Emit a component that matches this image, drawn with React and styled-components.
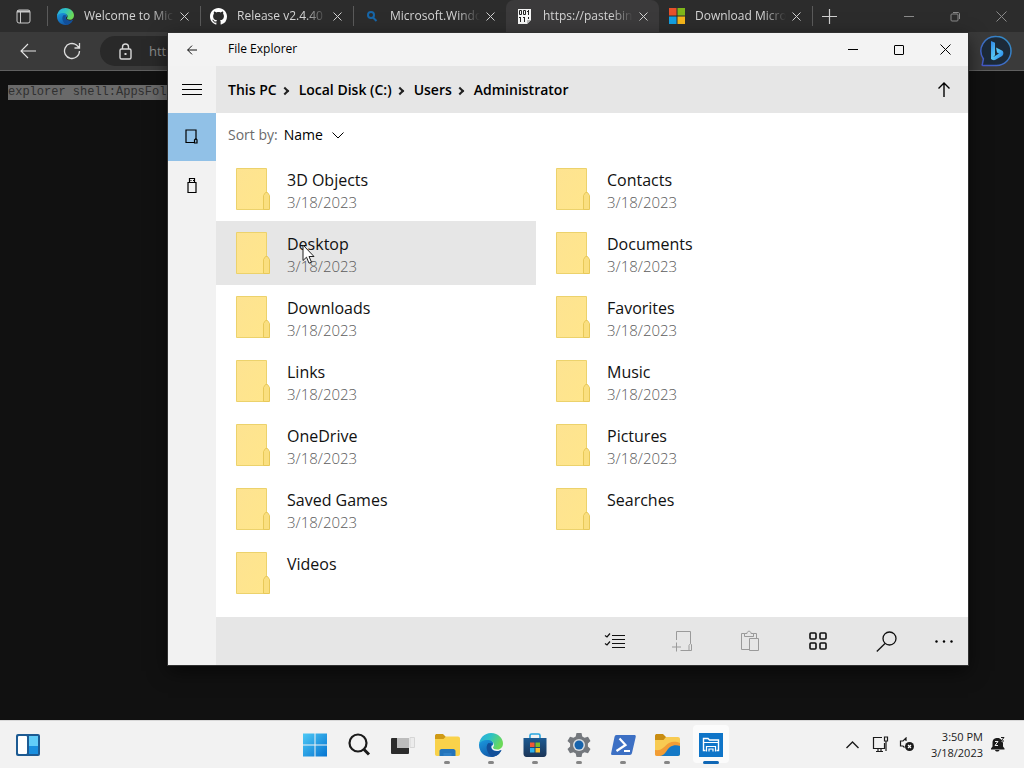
import React from 'react'
import styled, { createGlobalStyle } from 'styled-components'

const GlobalStyle = createGlobalStyle`
  * {
    box-sizing: border-box;
  }
  body {
    margin: 0;
    background: #111111;
    font-family: 'Open Sans', 'Noto Sans', sans-serif;
  }
  button, input, select {
    font: inherit;
    color: inherit;
    margin: 0;
    padding: 0;
    border: 0;
    background: none;
  }
  svg {
    display: block;
    flex: none;
  }
`

const Desktop = styled.div`
  position: relative;
  display: flex;
  flex-direction: column;
  height: 100vh;
  min-height: 480px;
  overflow: hidden;
`

/* browser */

const Browser = styled.section`
  flex: 1;
  min-height: 0;
  display: flex;
  flex-direction: column;
  background: #111111;
  color: #d0d0d0;
`

const TabStrip = styled.div`
  display: flex;
  height: 32px;
  background: #2c2c2c;
`

const TabActions = styled.button`
  width: 47px;
  display: grid;
  place-items: center;
  color: #c8c8c8;
`

const TabItem = styled.div`
  position: relative;
  display: flex;
  align-items: center;
  gap: 10px;
  flex: 0 1 153px;
  min-width: 0;
  padding: 0 8px 0 10px;
  background: ${({ $active }) => ($active ? '#3b3a3b' : 'transparent')};
  border-radius: 8px 8px 0 0;

  &::before {
    content: '';
    position: absolute;
    left: 0;
    top: 6px;
    width: 1px;
    height: 20px;
    background: ${({ $divider }) => ($divider ? '#5a5a5a' : 'transparent')};
  }
`

const TabTitle = styled.button`
  flex: 1;
  min-width: 0;
  margin-right: -8px;
  font-size: 12px;
  line-height: 20px;
  text-align: left;
  white-space: nowrap;
  overflow: hidden;
  color: #d4d4d4;
  mask-image: linear-gradient(to right, #000 75%, transparent 100%);
`

const IconButton = styled.button`
  width: ${({ $w }) => $w || 16}px;
  flex: none;
  display: grid;
  place-items: center;
  color: ${({ $color }) => $color || 'inherit'};
`

const NewTab = styled(IconButton)`
  position: relative;
  color: #d0d0d0;

  &::before {
    content: '';
    position: absolute;
    left: 0;
    top: 6px;
    width: 1px;
    height: 20px;
    background: #5a5a5a;
  }
`

const CaptionButtons = styled.div`
  display: flex;
  margin-left: auto;
`

const Toolbar = styled.div`
  display: flex;
  align-items: center;
  height: 39px;
  padding: 0 12px;
  gap: 12px;
  background: #3a3a3a;
  border-bottom: 1px solid #606060;
`

const AddressBar = styled.label`
  flex: 1;
  display: flex;
  align-items: center;
  gap: 16px;
  height: 30px;
  padding-left: 18px;
  border-radius: 15px;
  background: #292929;
  color: #d8d8d8;
`

const AddressInput = styled.input`
  flex: 1;
  min-width: 0;
  font-size: 13px;
  color: #8c8c8c;
`

const PageText = styled.pre`
  margin: 0;
  padding: 14px 8px;
  font: 12px/15px 'Liberation Mono', monospace;
  color: #303030;

  mark {
    display: inline-block;
    color: inherit;
    background: #6a6a6a;
  }
`

/* file explorer */

const Window = styled.main`
  position: absolute;
  top: 33px;
  left: 168px;
  right: 56px;
  bottom: 103px;
  display: flex;
  flex-direction: column;
  background: #ffffff;
  color: #000000;
  outline: 1px solid #303030;
  box-shadow: 0 6px 18px rgba(0, 0, 0, 0.6);
`

const TitleBar = styled.header`
  display: flex;
  height: 33px;
  background: #f3f3f3;
`

const WindowTitle = styled.h1`
  flex: 1;
  margin: 0;
  padding-left: 12px;
  font-size: 12px;
  line-height: 32px;
  font-weight: 400;
`

const WindowBody = styled.div`
  flex: 1;
  min-height: 0;
  display: flex;
`

const Sidebar = styled.nav`
  width: 48px;
  display: flex;
  flex-direction: column;
  background: #f2f2f2;
`

const SidebarButton = styled.button`
  height: 48px;
  display: grid;
  place-items: center;
  background: ${({ $active }) => ($active ? '#91c1e7' : 'transparent')};

  &:first-child {
    height: 47px;
  }
`

const Content = styled.div`
  flex: 1;
  min-width: 0;
  display: flex;
  flex-direction: column;
`

const PathBar = styled.div`
  display: flex;
  align-items: center;
  height: 47px;
  padding-left: 12px;
  background: #e6e6e6;
`

const Crumbs = styled.ol`
  flex: 1;
  display: flex;
  align-items: center;
  margin: 0;
  padding: 0;
  list-style: none;
  font-size: 14px;
  line-height: 20px;
  font-weight: 600;

  li {
    display: flex;
    align-items: center;
  }
  li + li::before {
    content: '';
    width: 4px;
    height: 4px;
    margin: 2px 11px 0 5px;
    border: solid #222;
    border-width: 2px 2px 0 0;
    transform: rotate(45deg);
  }
  a {
    color: inherit;
    text-decoration: none;
  }
`

const SortRow = styled.div`
  display: flex;
  align-items: center;
  height: 44px;
  padding-left: 12px;
  gap: 6px;
  font-size: 14px;
  line-height: 20px;

  label {
    color: #6b6b6b;
  }
  select {
    appearance: none;
    width: 42px;
  }
`

const FileGrid = styled.ul`
  flex: 1;
  min-height: 0;
  overflow: hidden;
  display: grid;
  grid-template-columns: repeat(auto-fill, 320px);
  grid-auto-rows: 64px;
  margin: 0;
  padding: 0;
  list-style: none;
`

const FileButton = styled.button`
  width: 100%;
  height: 100%;
  display: flex;
  gap: 16px;
  padding: 11px 20px 0;
  text-align: left;
  background: ${({ $hovered }) => ($hovered ? '#e6e6e6' : 'transparent')};
`

const FileText = styled.span`
  display: flex;
  flex-direction: column;
`

const FileName = styled.span`
  font-size: 16px;
  line-height: 24px;
  color: #111111;
`

const FileDate = styled.span`
  font-size: 15px;
  line-height: 20px;
  font-weight: 300;
  color: #5c5c5c;
`

const CommandBar = styled.footer`
  display: flex;
  justify-content: flex-end;
  height: 48px;
  background: #e6e6e6;
`

/* taskbar */

const Taskbar = styled.footer`
  display: grid;
  grid-template-columns: 1fr auto 1fr;
  height: 48px;
  background: #f2f2f2;
  border-top: 1px solid #d8d8d8;
  color: #1b1b1b;
`

const TaskGroup = styled.div`
  display: flex;
  align-items: center;
  padding: 0 ${({ $right }) => $right || 0}px 0 ${({ $left }) => $left || 0}px;
  justify-content: ${({ $end }) => ($end ? 'flex-end' : 'flex-start')};
`

const AppButton = styled.button`
  position: relative;
  width: 44px;
  height: 46px;
  display: grid;
  place-items: center;

  &::before {
    content: '';
    position: absolute;
    inset: 3px 4px 5px 4px;
    border-radius: 4px;
    background: ${({ $active }) => ($active ? '#fbfbfb' : 'transparent')};
  }
  &::after {
    content: '';
    position: absolute;
    bottom: 4px;
    width: ${({ $active }) => ($active ? 16 : 6)}px;
    height: 3px;
    border-radius: 2px;
    background: ${({ $active, $running }) =>
      $active ? '#1067b5' : $running ? '#858585' : 'transparent'};
  }
  svg {
    position: relative;
  }
`

const Clock = styled.time`
  display: flex;
  flex-direction: column;
  margin: 0 7px 0 12px;
  text-align: right;
  font-size: 11px;
  line-height: 16px;
`

const Pointer = styled.svg`
  position: absolute;
  left: 302px;
  top: 244px;
`

/* icons */

const Icon = ({ w = 16, h, children, sw = 1, ...rest }) => (
  <svg
    width={w}
    height={h || w}
    viewBox={`0 0 ${w} ${h || w}`}
    fill="none"
    stroke="currentColor"
    strokeWidth={sw}
    aria-hidden="true"
    {...rest}
  >
    {children}
  </svg>
)

const CloseIcon = ({ size = 9 }) => (
  <Icon w={size}>
    <path d={`M.5.5l${size - 1} ${size - 1}M${size - 0.5}.5l-${size - 1} ${size - 1}`} />
  </Icon>
)

const BackIcon = ({ w = 16 }) => (
  <Icon w={w} viewBox="0 0 16 16" sw={w > 12 ? 1.1 : 1.5}>
    <path d="M16 8H1M8 1L1 8l7 7" />
  </Icon>
)

const EdgeIcon = ({ w, id }) => (
  <svg width={w} height={w} viewBox="0 0 24 24" aria-hidden="true">
    <defs>
      <linearGradient id={`${id}a`} x1="0" y1="0" x2="1" y2="0.4">
        <stop offset="0" stopColor="#2aa9e4" />
        <stop offset="0.5" stopColor="#2ec2c4" />
        <stop offset="1" stopColor="#6bd958" />
      </linearGradient>
      <linearGradient id={`${id}b`} x1="0" y1="0" x2="0.6" y2="1">
        <stop offset="0" stopColor="#1b9de2" />
        <stop offset="1" stopColor="#1256a6" />
      </linearGradient>
    </defs>
    <path fill={`url(#${id}b)`} d="M0 12C0 8 4 5.500 8 6c5 .5 7 3.500 6 6-3 1-2 6 4 6 2 0 3.500-.7 4.500-1C20 22 16 24 12 24 5 24 0 18.500 0 12z" />
    <path fill="#124f99" d="M9.500 10C6 13 7.500 20 13 23.800c4 0 7.500-2.300 9.500-6.800-5 3-10.500 1-10.500-3.500 0-1.500.8-2.500 1.500-3z" />
    <path fill={`url(#${id}a)`} d="M0 11.500C.5 5 5.500 0 12 0c7.500 0 12 5.500 12 10.500 0 3.500-2.500 6-5.500 6-3 0-4.500-1-4.500-2 0-.7 1-1 1-2.500 0-3-3-5-6.500-5C4 7 .8 9 0 11.500z" />
  </svg>
)

const GithubIcon = () => (
  <svg width="17" height="17" viewBox="0 0 16 16" fill="#fff" aria-hidden="true">
    <path d="M8 0C3.580 0 0 3.580 0 8c0 3.540 2.290 6.530 5.470 7.590.4.070.55-.17.55-.38 0-.19-.01-.82-.01-1.490-2.010.37-2.530-.49-2.690-.94-.09-.23-.48-.94-.82-1.130-.28-.15-.68-.52-.01-.53.63-.01 1.080.58 1.230.82.72 1.210 1.870.87 2.330.66.070-.52.280-.87.510-1.070-1.780-.2-3.640-.89-3.640-3.950 0-.87.31-1.590.82-2.150-.08-.2-.36-1.020.08-2.120 0 0 .67-.21 2.200.82.64-.18 1.320-.27 2-.27s1.360.09 2 .27c1.530-1.040 2.200-.82 2.200-.82.44 1.100.16 1.920.08 2.120.51.56.82 1.270.82 2.150 0 3.070-1.870 3.750-3.650 3.950.29.25.54.73.54 1.480 0 1.070-.01 1.930-.01 2.200 0 .21.15.46.55.38A8.010 8.010 0 0 0 16 8c0-4.420-3.580-8-8-8z" />
  </svg>
)

const SearchTabIcon = () => (
  <Icon w={17} sw={2} stroke="#1766a8">
    <circle cx="8" cy="7" r="3" />
    <path d="M10 9.500l3.500 3.500" />
  </Icon>
)

const PasteIcon = () => (
  <svg width="17" height="17" viewBox="0 0 17 17" aria-hidden="true">
    <path fill="#f4f4f4" d="M2 1h13v11l-4 4H2z" />
    <g stroke="#222" fill="none">
      <path d="M3.500 2.500h2v4h-2zM7.500 2.500h2v4h-2zM12.500 2v5M11 3.500h1.500M4.500 9v5M3 9.500h1.500M8.500 9v5M7 9.500h1.500M12.500 9v2" />
    </g>
    <path fill="#bbb" d="M11 16v-4h4z" />
  </svg>
)

const FourSquares = () => (
  <svg width="16" height="16" viewBox="0 0 16 16" aria-hidden="true">
    <path fill="#e8502a" d="M0 0h7.500v7.500H0z" />
    <path fill="#7fb61a" d="M8.500 0H16v7.500H8.500z" />
    <path fill="#149fe0" d="M0 8.500h7.500V16H0z" />
    <path fill="#f5b51a" d="M8.500 8.500H16V16H8.500z" />
  </svg>
)

const BingIcon = () => (
  <svg width="32" height="32" viewBox="0 0 32 32" aria-hidden="true">
    <defs>
      <linearGradient id="bing" x1="0" y1="0" x2="1" y2="1">
        <stop offset="0" stopColor="#2f86e8" />
        <stop offset="0.5" stopColor="#57c7f5" />
        <stop offset="1" stopColor="#1f7bea" />
      </linearGradient>
      <linearGradient id="ring" x1="0" y1="1" x2="1" y2="0">
        <stop offset="0" stopColor="#4656c8" />
        <stop offset="1" stopColor="#3190c4" />
      </linearGradient>
    </defs>
    <path fill="#1c2a38" stroke="url(#ring)" strokeWidth="1.500" d="M16.500 1.500a14.500 14.500 0 1 1 0 29H3c-1 0-1-.8-.6-1.500l1-5A14.500 14.500 0 0 1 16.500 1.500z" />
    <path fill="url(#bing)" d="M11 6l4 1.700v12.500l-4 4zM16 12.500l6 3c2 1.200 1.800 4.500-.3 5.700l-6.200 3.600c-1.800.9-4 0-4.500-1.300l8-5-2-1z" />
  </svg>
)

const FolderIcon = () => (
  <svg width="35" height="42" viewBox="0 0 35 42" aria-hidden="true">
    <defs>
      <linearGradient id="folder" x1="0" y1="0" x2="1" y2="1">
        <stop offset="0" stopColor="#fde391" />
        <stop offset="1" stopColor="#ffe68c" />
      </linearGradient>
    </defs>
    <path fill="url(#folder)" stroke="#ecd26c" d="M.5.5h30v41H.5z" />
    <path fill="#fadf80" stroke="#e8c959" d="M27.500 41.500V27.500l2-3h2l2 3v14z" />
  </svg>
)

const StartIcon = () => (
  <svg width="24" height="24" viewBox="0 0 24 24" aria-hidden="true">
    <linearGradient id="start" x1="0" y1="0" x2="24" y2="24" gradientUnits="userSpaceOnUse">
      <stop offset="0" stopColor="#4fcaf6" />
      <stop offset="1" stopColor="#0573d0" />
    </linearGradient>
    <path fill="url(#start)" d="M0 .5h11.500v11H0zM12.500.5H24v11H12.500zM0 12.500h11.500v11H0zM12.500 12.500H24v11H12.500z" />
  </svg>
)

const TaskViewIcon = () => (
  <svg width="24" height="24" viewBox="0 0 24 24" aria-hidden="true">
    <path fill="#ececec" stroke="#d6d6d6" d="M19 4.500h4.500v10H19z" />
    <rect x="0" y="5" width="18" height="16" rx="1" fill="#2c2c2c" />
    <path fill="#bcbcbc" d="M6 5h12v10H6z" />
  </svg>
)

const ExplorerIcon = () => (
  <svg width="25" height="24" viewBox="0 0 25 24" aria-hidden="true">
    <path fill="#cf9a16" d="M0 3c0-1.500.8-2 2-2h6l3 3v5H0z" />
    <path fill="#f9d24a" d="M0 6h8.500L11 3.500h12c1 0 2 .8 2 2V21c0 1-.8 2-2 2H2c-1.200 0-2-1-2-2z" />
    <path fill="#2374bb" d="M4.500 23v-5c0-1 .8-2 2-2h12c1 0 2 1 2 2v5z" />
    <path fill="#2f80c6" d="M8.500 20h8v3h-8z" />
  </svg>
)

const StoreIcon = () => (
  <svg width="24" height="24" viewBox="0 0 24 24" aria-hidden="true">
    <defs>
      <linearGradient id="store" x1="0" y1="0" x2="0" y2="1">
        <stop offset="0" stopColor="#1c5a92" />
        <stop offset="1" stopColor="#1b3557" />
      </linearGradient>
    </defs>
    <path fill="none" stroke="#27a5df" strokeWidth="1.600" d="M7 6V2.500C7 1.500 7.500 1 8.500 1h7c1 0 1.500.5 1.500 1.500V6" />
    <path fill="url(#store)" d="M.5 5h23v15.500c0 2-1 3.500-3 3.500h-17c-2 0-3-1.500-3-3.500z" />
    <path fill="#ef5836" d="M7 9.500h4.500V14H7z" />
    <path fill="#7dbb2b" d="M12.500 9.500H17V14h-4.500z" />
    <path fill="#2bb0ea" d="M7 15h4.500v4.500H7z" />
    <path fill="#fbc02d" d="M12.500 15H17v4.500h-4.500z" />
  </svg>
)

const GearIcon = () => (
  <svg width="24" height="24" viewBox="0 0 24 24" aria-hidden="true">
    <path fill="#74787d" strokeLinejoin="round" d="M9.500 0h5l.8 3.500 2.200 1.200 3.500-1 2.500 4.300-2.600 2.500v3l2.600 2.500-2.500 4.300-3.500-1-2.200 1.200-.8 3.500h-5l-.8-3.500-2.200-1.200-3.500 1L.5 16l2.600-2.500v-3L.5 8 3 3.700l3.500 1 2.200-1.200z" />
    <circle cx="12" cy="12" r="6" fill="#d9dde1" />
    <circle cx="12" cy="12" r="4.500" fill="#1763ac" />
  </svg>
)

const PowerShellIcon = () => (
  <svg width="25" height="20" viewBox="0 0 25 20" aria-hidden="true">
    <path fill="#3d70c4" d="M5.500 0H23c1.500 0 2 .8 1.700 2L21 18c-.3 1.300-1 2-2.300 2H1.500C.3 20-.2 19.300.2 18L3.500 2C3.800.7 4.300 0 5.500 0z" />
    <path fill="none" stroke="#fff" strokeWidth="2.200" d="M8.500 3.500l6 6.500-9 6M13 16h6" />
  </svg>
)

const FolderWaveIcon = () => (
  <svg width="25" height="24" viewBox="0 0 25 24" aria-hidden="true">
    <path fill="#c98d12" d="M0 3c0-1.500.8-2 2-2h6l3 3v6H0z" />
    <path fill="#f8cb52" d="M0 7h8.500L11 4h12c1 0 2 .8 2 2v15c0 1-.8 2-2 2H2c-1.200 0-2-1-2-2z" />
    <path fill="#f29d35" d="M0 17c8 1 9-4 14-7 4-2 8-1 11 0v4L6 23H2c-1.200 0-2-1-2-2z" />
    <path fill="#1479c6" d="M5 23c6-1 6-6 10-9 3-2 7-2 10-1v8c0 1-.8 2-2 2z" />
  </svg>
)

const AppExplorerIcon = () => (
  <svg width="24" height="24" viewBox="0 0 24 24" aria-hidden="true">
    <path fill="#0f75c8" d="M0 0h24v24H0z" />
    <path fill="none" stroke="#fff" strokeWidth="1.400" d="M6.500 17.500h-2v-12H9l1.500 1.500h9v10.500h-2" />
    <path fill="none" stroke="#fff" strokeWidth="1.200" d="M4.500 9.500h15M7.500 18.500v-5h9v5M10 18.500V16h4v2.500" />
  </svg>
)

const WidgetsIcon = () => (
  <svg width="24" height="22" viewBox="0 0 24 22" aria-hidden="true">
    <rect width="24" height="22" rx="2" fill="#1d5b93" />
    <rect x="2" y="2" width="9" height="18" rx="1" fill="#ffffff" />
    <path fill="#61cdf9" d="M13 2h9v10h-9z" />
    <path fill="#198fdf" d="M13 12h9v8h-9z" />
  </svg>
)

const tabs = [
  { title: 'Welcome to Microsoft Edge', icon: <EdgeIcon w={17} id="tab" />, divider: true },
  { title: 'Release v2.4.40 · Release', icon: <GithubIcon />, divider: true },
  { title: 'Microsoft.WindowsTerminal', icon: <SearchTabIcon />, divider: true },
  { title: 'https://pastebin.com/raw', icon: <PasteIcon />, active: true },
  { title: 'Download Microsoft Edge', icon: <FourSquares /> },
]

const files = [
  { name: '3D Objects', date: '3/18/2023' },
  { name: 'Contacts', date: '3/18/2023' },
  { name: 'Desktop', date: '3/18/2023', hovered: true },
  { name: 'Documents', date: '3/18/2023' },
  { name: 'Downloads', date: '3/18/2023' },
  { name: 'Favorites', date: '3/18/2023' },
  { name: 'Links', date: '3/18/2023' },
  { name: 'Music', date: '3/18/2023' },
  { name: 'OneDrive', date: '3/18/2023' },
  { name: 'Pictures', date: '3/18/2023' },
  { name: 'Saved Games', date: '3/18/2023' },
  { name: 'Searches' },
  { name: 'Videos' },
]

const crumbs = ['This PC', 'Local Disk (C:)', 'Users', 'Administrator']

const commands = [
  {
    label: 'Select',
    icon: (
      <Icon w={21} h={18}>
        <path strokeWidth="1.200" d="M8 3.500h13M8 7.500h13M8 11.500h13M8 15.500h13M1 3.500l2 1.500 3-3.500M1 11.500l2 1.500 3-3.500" />
      </Icon>
    ),
  },
  {
    label: 'New folder',
    disabled: true,
    icon: (
      <Icon w={21} h={22}>
        <path d="M4.500 10V1.500h14v12M8.500 20.500h9M18.500 13.500l-1.500 2v5h2.500v-6zM4.500 12.500v9M0 17h9" />
      </Icon>
    ),
  },
  {
    label: 'Paste',
    disabled: true,
    icon: (
      <Icon w={20} h={22}>
        <path d="M9.500 19.500h-8v-16h3v3h9v-3h3v5M4.500 4.500v-1h2.500c0-3 4-3 4 0h2.500v3M9.500 8.500h9v12h-9z" />
      </Icon>
    ),
  },
  {
    label: 'View',
    icon: (
      <Icon w={18} sw={1.6}>
        <rect x="1" y="1" width="6" height="6" rx="1" />
        <rect x="11" y="1" width="6" height="6" rx="1" />
        <rect x="1" y="11" width="6" height="6" rx="1" />
        <rect x="11" y="11" width="6" height="6" rx="1" />
      </Icon>
    ),
  },
  {
    label: 'Search',
    icon: (
      <Icon w={21} sw={1.3}>
        <circle cx="13.500" cy="7.500" r="6.500" />
        <path d="M9 12.500L.8 20.500" />
      </Icon>
    ),
  },
]

const apps = [
  { label: 'Start', icon: <StartIcon /> },
  {
    label: 'Search',
    icon: (
      <Icon w={24} sw={2.2}>
        <circle cx="11" cy="10" r="8.500" />
        <path strokeWidth="3" d="M17 16.500l5 5" />
      </Icon>
    ),
  },
  { label: 'Task view', icon: <TaskViewIcon /> },
  { label: 'File Explorer', icon: <ExplorerIcon />, running: true },
  { label: 'Microsoft Edge', icon: <EdgeIcon w={24} id="bar" />, running: true },
  { label: 'Microsoft Store', icon: <StoreIcon />, running: true },
  { label: 'Settings', icon: <GearIcon />, running: true },
  { label: 'PowerShell', icon: <PowerShellIcon />, running: true },
  { label: 'Files', icon: <FolderWaveIcon />, running: true },
  { label: 'File Explorer (UWP)', icon: <AppExplorerIcon />, active: true },
]

const BrowserWindow = () => (
  <Browser>
    <TabStrip>
      <TabActions aria-label="Tab actions">
        <Icon w={15}>
          <rect x="1" y="1" width="13" height="13" rx="2" />
          <path strokeWidth="2" d="M1 2.500h13" />
          <path d="M4.500 3v11" />
        </Icon>
      </TabActions>
      {tabs.map((tab) => (
        <TabItem key={tab.title} $active={tab.active} $divider={tab.divider}>
          {tab.icon}
          <TabTitle>{tab.title}</TabTitle>
          <IconButton aria-label="Close tab">
            <CloseIcon />
          </IconButton>
        </TabItem>
      ))}
      <NewTab $w={34} aria-label="New tab">
        <Icon w={15}>
          <path strokeWidth="1.200" d="M7.500 0v15M0 7.500h15" />
        </Icon>
      </NewTab>
      <CaptionButtons>
        <IconButton $w={46} $color="#8a8a8a" aria-label="Minimize">
          <Icon w={10}><path d="M0 5.500h10" /></Icon>
        </IconButton>
        <IconButton $w={46} $color="#8a8a8a" aria-label="Restore">
          <Icon w={11}>
            <rect x="1" y="3" width="7" height="7" rx="1" />
            <path d="M3 1.500h5c1 0 1.500.5 1.500 1.500v5" />
          </Icon>
        </IconButton>
        <IconButton $w={46} $color="#8a8a8a" aria-label="Close">
          <CloseIcon size={11} />
        </IconButton>
      </CaptionButtons>
    </TabStrip>
    <Toolbar>
      <IconButton $w={32} $color="#e6e6e6" aria-label="Back">
        <BackIcon />
      </IconButton>
      <IconButton $w={32} $color="#dddddd" aria-label="Refresh">
        <Icon w={18} sw={1.3}>
          <path d="M16.500 9A7.500 7.500 0 1 1 13.500 3l2.500 2.500M16.500 1v5h-5" />
        </Icon>
      </IconButton>
      <AddressBar>
        <Icon w={15} h={17} sw={1.4}>
          <rect x="2" y="6" width="11" height="10" rx="1.500" />
          <path d="M4.500 6V4c0-4 6-4 6 0v2" />
          <path strokeWidth="2" d="M6.500 11h2" />
        </Icon>
        <AddressInput aria-label="Address" defaultValue="https://pastebin.com/raw" />
      </AddressBar>
      <IconButton $w={32} aria-label="Bing">
        <BingIcon />
      </IconButton>
    </Toolbar>
    <PageText>
      <mark>explorer shell:AppsFolder</mark>
    </PageText>
  </Browser>
)

const FileExplorer = () => (
  <Window>
    <TitleBar>
      <IconButton $w={48} aria-label="Go back">
        <BackIcon w={10} />
      </IconButton>
      <WindowTitle>File Explorer</WindowTitle>
      <IconButton $w={46} aria-label="Minimize window">
        <Icon w={10}><path d="M0 4.500h10" /></Icon>
      </IconButton>
      <IconButton $w={46} aria-label="Maximize window">
        <Icon w={10}><rect x="0.500" y="0.500" width="9" height="9" rx="0.500" /></Icon>
      </IconButton>
      <IconButton $w={46} aria-label="Close window">
        <CloseIcon size={11} />
      </IconButton>
    </TitleBar>
    <WindowBody>
      <Sidebar>
        <SidebarButton aria-label="Menu">
          <Icon w={20} h={11}><path d="M0 .5h20M0 5.500h20M0 10.500h20" /></Icon>
        </SidebarButton>
        <SidebarButton $active aria-label="This PC">
          <Icon w={14} h={16} sw={1.2}>
            <path d="M9 13.500H1V1h10v8.500M11 9.500l-1.500 1.500v3H12v-3z" />
          </Icon>
        </SidebarButton>
        <SidebarButton aria-label="USB drive">
          <Icon w={10} h={17} sw={1.2}>
            <path d="M2.500 5V1.500h5V5M1 5.500h8v10H1zM3.500 3.500h1M6 3.500h1" />
          </Icon>
        </SidebarButton>
      </Sidebar>
      <Content>
        <PathBar>
          <Crumbs>
            {crumbs.map((crumb) => (
              <li key={crumb}>
                <a href="#path">{crumb}</a>
              </li>
            ))}
          </Crumbs>
          <IconButton $w={48} aria-label="Up">
            <Icon w={12} h={16} sw={1.4}><path d="M6 15V1M.5 6.500L6 1l5.500 5.500" /></Icon>
          </IconButton>
        </PathBar>
        <SortRow>
          <label htmlFor="sort">Sort by:</label>
          <select id="sort" defaultValue="Name">
            <option>Name</option>
            <option>Date</option>
          </select>
          <Icon w={12} h={7}><path d="M.5.5L6 6 11.500.5" /></Icon>
        </SortRow>
        <FileGrid>
          {files.map((file) => (
            <li key={file.name}>
              <FileButton $hovered={file.hovered}>
                <FolderIcon />
                <FileText>
                  <FileName>{file.name}</FileName>
                  {file.date && <FileDate>{file.date}</FileDate>}
                </FileText>
              </FileButton>
            </li>
          ))}
        </FileGrid>
        <CommandBar>
          {commands.map((command) => (
            <IconButton
              key={command.label}
              $w={68}
              $color={command.disabled ? '#9a9a9a' : '#111111'}
              aria-label={command.label}
              disabled={command.disabled}
            >
              {command.icon}
            </IconButton>
          ))}
          <IconButton $w={48} aria-label="More">
            <Icon w={18} h={3} stroke="none" fill="#000">
              <circle cx="1.500" cy="1.500" r="1.200" />
              <circle cx="9" cy="1.500" r="1.200" />
              <circle cx="16.500" cy="1.500" r="1.200" />
            </Icon>
          </IconButton>
        </CommandBar>
      </Content>
    </WindowBody>
  </Window>
)

const TaskbarPanel = () => (
  <Taskbar>
    <TaskGroup $left={6}>
      <AppButton aria-label="Widgets">
        <WidgetsIcon />
      </AppButton>
    </TaskGroup>
    <TaskGroup $left={2}>
      {apps.map((app) => (
        <AppButton key={app.label} aria-label={app.label} $active={app.active} $running={app.running}>
          {app.icon}
        </AppButton>
      ))}
    </TaskGroup>
    <TaskGroup $end $right={20}>
      <IconButton $w={28} aria-label="Hidden icons">
        <Icon w={13} h={8} sw={1.4}><path d="M.5 7L6.500 1l6 6" /></Icon>
      </IconButton>
      <IconButton $w={28} aria-label="Network">
        <Icon w={17} h={17} sw={1.2}>
          <path d="M10 1.500H1.500v11h11V7M4 15.500h7M6 12.500v3M9 12.500v3" />
          <path d="M12.500 1h3v4h-3zM14 5v10" />
        </Icon>
      </IconButton>
      <IconButton $w={24} aria-label="Volume">
        <Icon w={16} h={15} sw={1.2}>
          <path d="M7 4V1L4 4H1.500v5H4l1.500 1.500" />
          <circle cx="10.500" cy="9.500" r="4.500" fill="currentColor" stroke="none" />
          <path stroke="#fff" d="M9 8l3 3M12 8l-3 3" />
        </Icon>
      </IconButton>
      <Clock>
        <span>3:50 PM</span>
        <span>3/18/2023</span>
      </Clock>
      <IconButton $w={14} aria-label="Notifications">
        <Icon w={15} h={15} stroke="none" fill="currentColor">
          <path d="M1 11.500l1.500-2V5.500c0-6 8-5 8.500-3v2l2 1v4l1.500 2v1H1zM5 13h4.500c-.5 2-4 2-4.500 0z" />
          <path fill="none" stroke="#f2f2f2" d="M5 4.500h3L5 8.500h3" />
          <path fill="none" stroke="currentColor" d="M11 .5h3l-3 3.500h3" />
        </Icon>
      </IconButton>
    </TaskGroup>
  </Taskbar>
)

const App = () => (
  <Desktop>
    <GlobalStyle />
    <BrowserWindow />
    <FileExplorer />
    <TaskbarPanel />
    <Pointer width="13" height="21" viewBox="0 0 13 21" aria-hidden="true">
      <path fill="#fff" stroke="#222" d="M1 1v15.500l3.500-3.300 2.500 6 2.500-1-2.500-5.700h5z" />
    </Pointer>
  </Desktop>
)

export default App
